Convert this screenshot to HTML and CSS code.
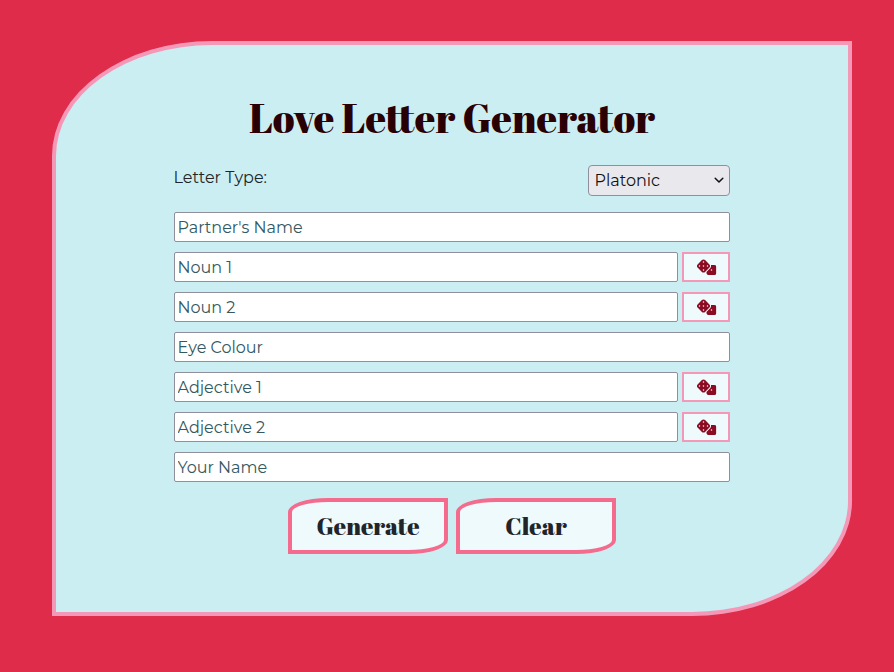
FILE: index.html
```html
<!DOCTYPE html>
<html lang="en">
<head>
<meta charset="utf-8">
<title>Love Letter Generator</title>
<link rel="stylesheet" href="styles.css">
</head>
<body>
<svg class="sprite" aria-hidden="true"><symbol id="dice" viewBox="0 0 640 512"><path d="M274.9 34.3c-28.1-28.1-73.7-28.1-101.8 0L34.3 173.1c-28.1 28.1-28.1 73.7 0 101.8L173.1 413.7c28.1 28.1 73.7 28.1 101.8 0L413.7 274.9c28.1-28.1 28.1-73.7 0-101.8L274.9 34.3zM200 224a24 24 0 1 1 48 0 24 24 0 1 1 -48 0zM96 200a24 24 0 1 1 0 48 24 24 0 1 1 0-48zM224 376a24 24 0 1 1 0-48 24 24 0 1 1 0 48zM352 200a24 24 0 1 1 0 48 24 24 0 1 1 0-48zM224 120a24 24 0 1 1 0-48 24 24 0 1 1 0 48zm96 328c0 35.3 28.7 64 64 64H576c35.3 0 64-28.7 64-64V256c0-35.3-28.7-64-64-64H461.7c11.6 36 3.1 77-25.4 105.5L320 413.8V448zM480 328a24 24 0 1 1 0 48 24 24 0 1 1 0-48z"/></symbol></svg>
<main class="panel">
  <h1 class="title">Love Letter Generator</h1>
  <form class="form">
    <div class="type-row">
      <label for="type">Letter Type:</label>
      <div class="select-wrap">
        <select id="type" class="select"><option>Platonic</option></select>
        <svg class="chevron" viewBox="0 0 10 7"><path d="M1.2 1.2 5 5l3.8-3.8"/></svg>
      </div>
    </div>
    <div class="row"><input class="field" placeholder="Partner's Name"></div>
    <div class="row"><input class="field" placeholder="Noun 1"><button type="button" class="roll"><svg><use href="#dice"/></svg></button></div>
    <div class="row"><input class="field" placeholder="Noun 2"><button type="button" class="roll"><svg><use href="#dice"/></svg></button></div>
    <div class="row"><input class="field" placeholder="Eye Colour"></div>
    <div class="row"><input class="field" placeholder="Adjective 1"><button type="button" class="roll"><svg><use href="#dice"/></svg></button></div>
    <div class="row"><input class="field" placeholder="Adjective 2"><button type="button" class="roll"><svg><use href="#dice"/></svg></button></div>
    <div class="row"><input class="field" placeholder="Your Name"></div>
    <div class="actions">
      <button type="button" class="action">Generate</button>
      <button type="button" class="action">Clear</button>
    </div>
  </form>
</main>
</body>
</html>
```
FILE: styles.css
```css
* { box-sizing: border-box; }
body {
  margin: 0;
  padding: 41px 42px 0 52px;
  height: 672px;
  overflow: hidden;
  background: #de2c4a;
  color: #212529;
  font: 16px/24px Montserrat, Inter, "Open Sans", sans-serif;
}
.sprite { display: none; }
.panel {
  width: 800px;
  height: 575px;
  padding: 49px 118px 0;
  border: 4px solid #f598b8;
  border-radius: 20% 0;
  background: #cbeef2;
}
.title {
  margin: 0 0 23px;
  height: 48px;
  color: #290004;
  font: 500 40px/48px "Abril Fatface", "Liberation Serif", serif;
  text-align: center;
  white-space: nowrap;
}
.form { display: flex; flex-direction: column; gap: 10px; }
.type-row {
  display: flex;
  justify-content: space-between;
  height: 31px;
  margin-bottom: 6px;
}
.type-row label { padding-top: 1px; margin-left: -0.5px; }
.select-wrap { position: relative; }
.select {
  display: block;
  appearance: none;
  width: 142px;
  height: 31px;
  padding: 0 5.5px;
  border: 1px solid #8f8f9d;
  border-radius: 4px;
  background: #e9e9ed;
  color: #111;
  font: inherit;
}
.chevron {
  position: absolute;
  right: 6px;
  top: 12px;
  width: 10px;
  height: 7px;
  fill: none;
  stroke: #111;
  stroke-width: 1.5;
  stroke-linecap: round;
  stroke-linejoin: round;
  pointer-events: none;
}
.row { display: flex; gap: 4px; height: 30px; }
.field {
  flex: 1;
  min-width: 0;
  padding: 2px 3px 0 2.5px;
  border: 1px solid #8f8f9d;
  border-radius: 2px;
  background: #fff;
  font: inherit;
}
.field::placeholder { color: #335860; opacity: 1; }
.roll {
  display: flex;
  align-items: center;
  justify-content: center;
  width: 48px;
  padding: 0;
  border: 2px solid #f598b8;
  background: #eefafc;
}
.roll svg { width: 20px; height: 16px; fill: #8c0b22; transform: translateX(0.5px); }
.actions { display: flex; justify-content: center; gap: 8px; margin-top: 6px; }
.action {
  width: 160px;
  height: 56px;
  padding: 0;
  border: 4px solid #f56b8e;
  border-radius: 25% 0;
  background: #eefafc;
  color: #212529;
  font: 500 24px/36px "Abril Fatface", "Liberation Serif", serif;
}
```
